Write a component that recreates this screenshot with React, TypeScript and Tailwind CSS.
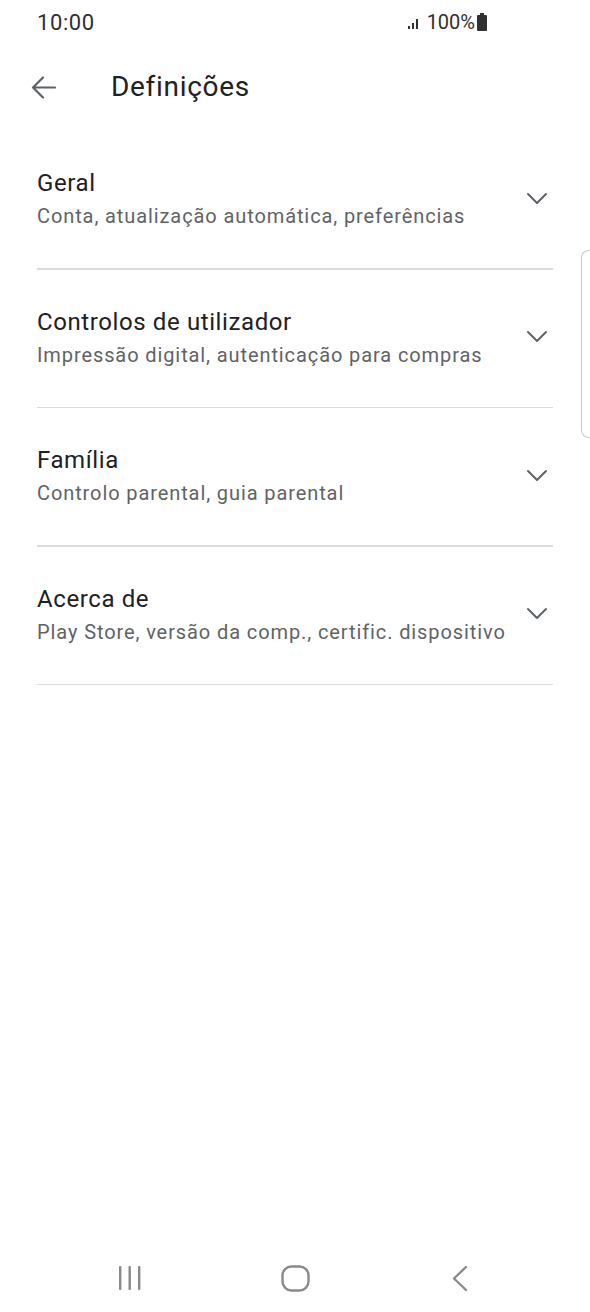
const sections = [
    { title: "Geral", subtitle: "Conta, atualização automática, preferências" },
    { title: "Controlos de utilizador", subtitle: "Impressão digital, autenticação para compras" },
    { title: "Família", subtitle: "Controlo parental, guia parental" },
    { title: "Acerca de", subtitle: "Play Store, versão da comp., certific. dispositivo" },
]

export default function App() {
    return (
        <div className="relative flex flex-col w-[590px] h-[1312px] bg-white font-['Roboto',sans-serif] overflow-hidden">
            {/* Status bar */}
            <div className="flex items-center justify-between h-[44px] pl-[37px] pr-[103px] text-[#303030]">
                <span className="text-[22px] tracking-[0.6px]">10:00</span>
                <div className="flex items-center">
                    <svg width="14" height="14" viewBox="0 0 14 14" className="mr-[5px] mt-[2px]">
                        <rect x="0" y="10" width="2" height="3" fill="#303030" />
                        <rect x="4" y="7" width="2" height="6" fill="#303030" />
                        <rect x="8" y="3" width="2" height="10" fill="#303030" />
                    </svg>
                    <span className="text-[20px]">100%</span>
                    <svg width="10" height="18" viewBox="0 0 10 18" className="ml-[2px]">
                        <rect x="3" y="0" width="4" height="2" fill="#303030" />
                        <rect x="0" y="2" width="10" height="16" rx="1" fill="#303030" />
                    </svg>
                </div>
            </div>

            {/* Header */}
            <div className="flex items-center h-[86px] pl-[31px]">
                <svg width="25" height="25" viewBox="0 0 25 25">
                    <path d="M24 12.5 H2 M12 2.5 L2 12.5 L12 22.5" fill="none" stroke="#5f6368" strokeWidth="2.2" strokeLinecap="round" strokeLinejoin="round" />
                </svg>
                <h1 className="ml-[55px] text-[28px] text-[#202124] tracking-[0.7px]">Definições</h1>
            </div>

            {/* Sections */}
            <div className="flex flex-col pt-[1px] px-[37px]">
                {sections.map((s) => (
                    <div key={s.title} className="flex flex-col">
                        <div className="flex items-center justify-between h-[137px] pb-[2px]">
                            <div className="flex flex-col">
                                <span className="text-[24px] leading-[30px] text-[#202124] tracking-[0.6px]">{s.title}</span>
                                <span className="mt-[5px] text-[20px] leading-[26px] text-[#5f6368] tracking-[0.9px]">{s.subtitle}</span>
                            </div>
                            <svg width="22" height="14" viewBox="0 0 22 14" className="mr-[5px]">
                                <path d="M2 2 L11 11 L20 2" fill="none" stroke="#5f6368" strokeWidth="2" strokeLinecap="round" strokeLinejoin="round" />
                            </svg>
                        </div>
                        <div className="h-[1.5px] bg-[#dadce0]" />
                    </div>
                ))}
            </div>

            <div className="flex-1" />

            {/* Navigation bar */}
            <div className="flex items-center h-[72px] pl-[118px] pt-[4px]">
                <svg width="24" height="26" viewBox="0 0 24 26">
                    <rect x="1" y="1" width="2.4" height="24" rx="1" fill="#8a8a8a" />
                    <rect x="10.5" y="1" width="2.4" height="24" rx="1" fill="#8a8a8a" />
                    <rect x="20" y="1" width="2.4" height="24" rx="1" fill="#8a8a8a" />
                </svg>
                <svg width="29" height="27" viewBox="0 0 29 27" className="ml-[139px]">
                    <rect x="1.5" y="1.5" width="26" height="24" rx="9" fill="none" stroke="#8a8a8a" strokeWidth="2.4" />
                </svg>
                <svg width="16" height="27" viewBox="0 0 16 27" className="ml-[142px]">
                    <path d="M14 2 L2 13.5 L14 25" fill="none" stroke="#8a8a8a" strokeWidth="2.4" strokeLinecap="round" strokeLinejoin="round" />
                </svg>
            </div>

            {/* Edge panel handle */}
            <div className="absolute top-[250px] right-0 w-[9px] h-[188px] rounded-l-[8px] border border-r-0 border-[#c8c8c8] bg-white" />
        </div>
    )
}
